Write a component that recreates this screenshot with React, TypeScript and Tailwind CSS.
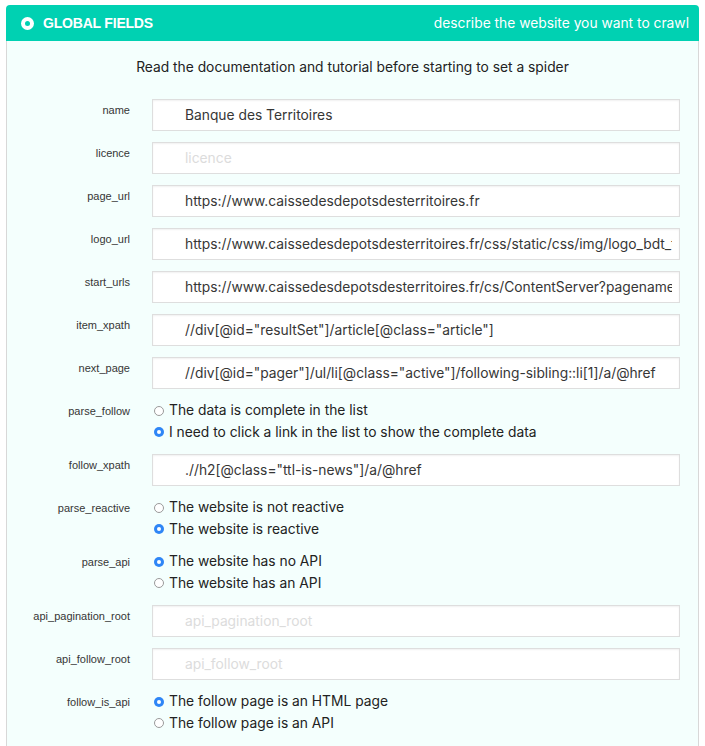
import React from "react";

type Row =
  | { kind: "input"; label: string; value?: string; placeholder?: string }
  | { kind: "radio"; label: string; options: string[]; checked: number };

const rows: Row[] = [
  { kind: "input", label: "name", value: "Banque des Territoires" },
  { kind: "input", label: "licence", placeholder: "licence" },
  { kind: "input", label: "page_url", value: "https://www.caissedesdepotsdesterritoires.fr" },
  {
    kind: "input",
    label: "logo_url",
    value: "https://www.caissedesdepotsdesterritoires.fr/css/static/css/img/logo_bdt_texte.png",
  },
  {
    kind: "input",
    label: "start_urls",
    value: "https://www.caissedesdepotsdesterritoires.fr/cs/ContentServer?pagename=Territoires/Actualites",
  },
  { kind: "input", label: "item_xpath", value: '//div[@id="resultSet"]/article[@class="article"]' },
  {
    kind: "input",
    label: "next_page",
    value: '//div[@id="pager"]/ul/li[@class="active"]/following-sibling::li[1]/a/@href',
  },
  {
    kind: "radio",
    label: "parse_follow",
    options: ["The data is complete in the list", "I need to click a link in the list to show the complete data"],
    checked: 1,
  },
  { kind: "input", label: "follow_xpath", value: './/h2[@class="ttl-is-news"]/a/@href' },
  {
    kind: "radio",
    label: "parse_reactive",
    options: ["The website is not reactive", "The website is reactive"],
    checked: 1,
  },
  {
    kind: "radio",
    label: "parse_api",
    options: ["The website has no API", "The website has an API"],
    checked: 0,
  },
  { kind: "input", label: "api_pagination_root", placeholder: "api_pagination_root" },
  { kind: "input", label: "api_follow_root", placeholder: "api_follow_root" },
  {
    kind: "radio",
    label: "follow_is_api",
    options: ["The follow page is an HTML page", "The follow page is an API"],
    checked: 0,
  },
];

const sans = { fontFamily: "Inter, 'Liberation Sans', Arial, sans-serif" };

function Radio({ on }: { on: boolean }) {
  return on ? (
    <span className="w-[10px] h-[10px] rounded-full bg-[#2f86f6] flex items-center justify-center shrink-0">
      <span className="w-[4px] h-[4px] rounded-full bg-white" />
    </span>
  ) : (
    <span className="w-[10px] h-[10px] rounded-full bg-white border border-[#9a9a9a] shrink-0" />
  );
}

export default function App() {
  return (
    <div
      className="min-h-screen bg-white pt-[5px] pl-[6px]"
      style={{ fontFamily: '"Liberation Sans", Arial, sans-serif' }}
    >
      <div className="w-[693px]">
        <div className="h-[36px] bg-[#00d1b2] rounded-t-[4px] flex items-center pl-[15px] pr-[10px] text-white">
          <span className="w-[13px] h-[13px] rounded-full bg-white flex items-center justify-center">
            <span className="w-[5px] h-[5px] rounded-full bg-[#00d1b2]" />
          </span>
          <span className="ml-[9px] font-bold text-[14px] tracking-[-0.2px]">GLOBAL FIELDS</span>
          <span className="ml-auto text-[13.8px]" style={sans}>
            describe the website you want to crawl
          </span>
        </div>
        <div className="bg-[#f4fffd] border-l border-r border-[#d8d8d8] pt-[18px] pb-[20px] min-h-[720px]">
          <div className="text-center text-[13.8px] leading-[17px] text-[#222]" style={sans}>
            Read the documentation and tutorial before starting to set a spider
          </div>
          <div className="mt-[23px] flex flex-col gap-[11px] pr-[18px]">
            {rows.map((r) => (
              <div key={r.label} className="flex">
                <div className="w-[123px] shrink-0 text-right text-[11px] leading-[13px] pt-[5px] text-[#363636]">
                  {r.label}
                </div>
                <div className="ml-[22px] flex-1 min-w-0">
                  {r.kind === "input" ? (
                    <div className="h-[32px] bg-white border border-[#dedede] shadow-[inset_0_1px_2px_rgba(10,10,10,0.06)] pl-[32px] pr-[7px] flex items-center">
                      <div className="overflow-hidden flex-1 min-w-0">
                        <span
                          className={
                            "whitespace-nowrap text-[13.8px] " + (r.value ? "text-[#363636]" : "text-[#dcdcdc]")
                          }
                          style={sans}
                        >
                          {r.value ?? r.placeholder}
                        </span>
                      </div>
                    </div>
                  ) : (
                    <div className="flex flex-col">
                      {r.options.map((o, i) => (
                        <div key={o} className="flex items-center h-[21.5px] pl-[2px] text-[13.8px] text-[#222]">
                          <Radio on={i === r.checked} />
                          <span className="ml-[5px] whitespace-nowrap" style={sans}>
                            {o}
                          </span>
                        </div>
                      ))}
                    </div>
                  )}
                </div>
              </div>
            ))}
          </div>
        </div>
      </div>
    </div>
  );
}
